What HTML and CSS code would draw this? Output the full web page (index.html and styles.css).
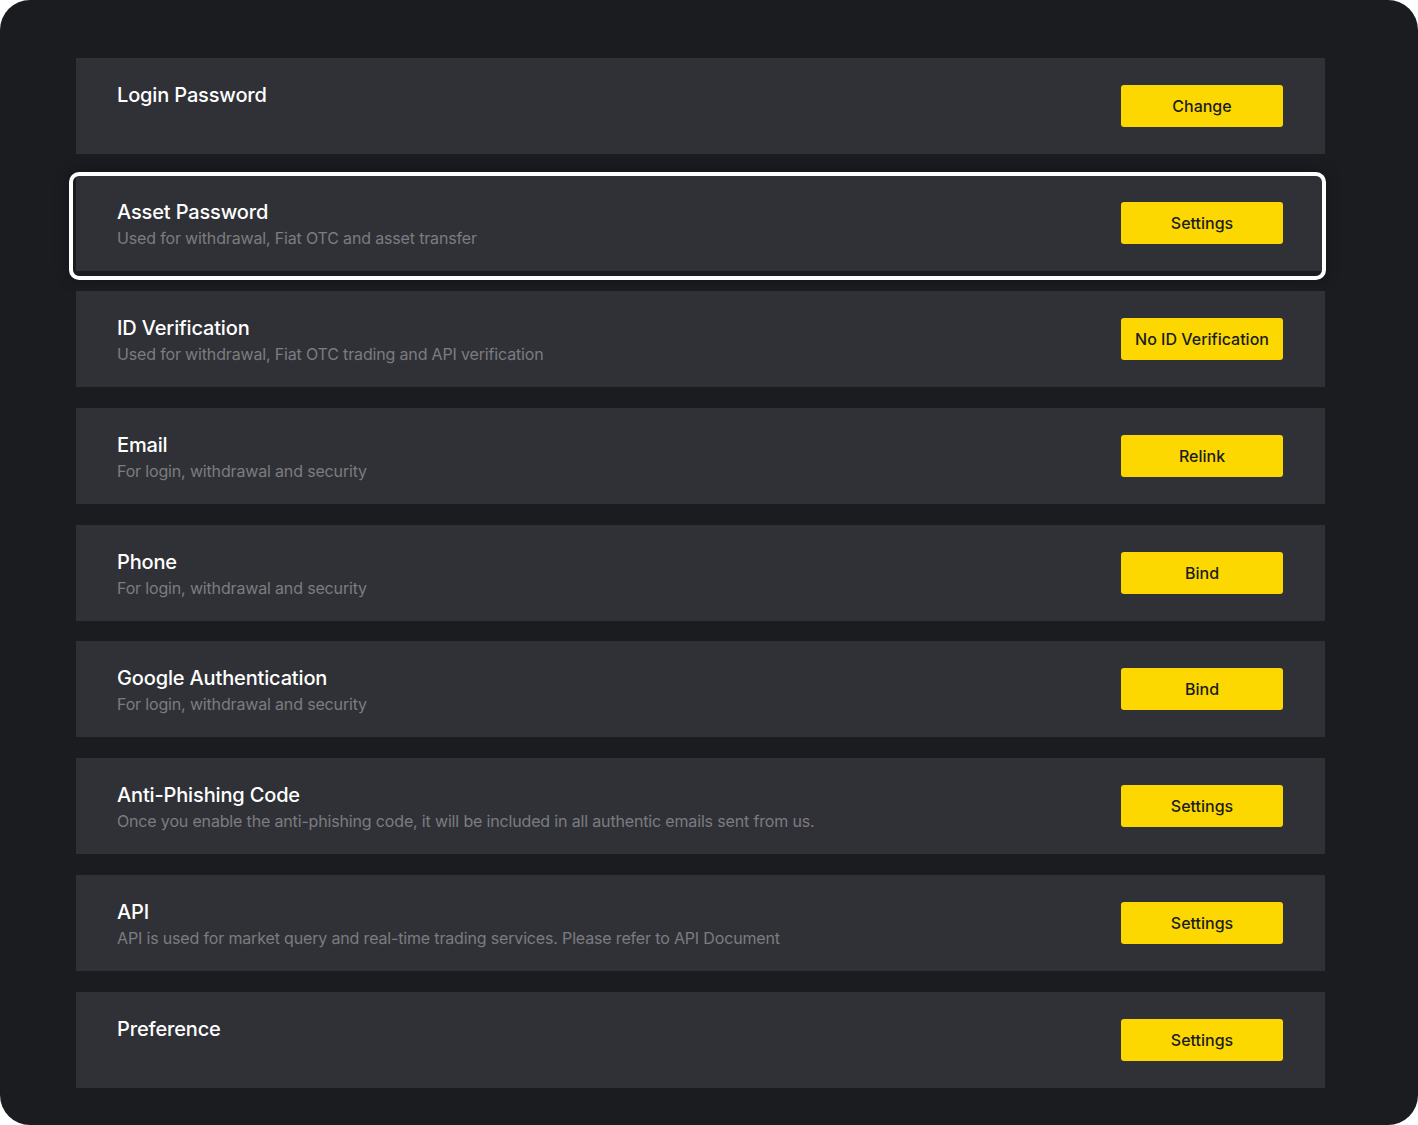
FILE: index.html
```html
<!DOCTYPE html>
<html>
<head>
<meta charset="utf-8">
<link rel="stylesheet" href="styles.css">
</head>
<body>
<div class="panel">
  <div class="list">
    <div class="card">
      <div class="info"><div class="title">Login Password</div></div>
      <button class="btn">Change</button>
    </div>
    <div class="card active">
      <div class="info"><div class="title">Asset Password</div><div class="desc">Used for withdrawal, Fiat OTC and asset transfer</div></div>
      <button class="btn">Settings</button>
      <div class="focus-ring"></div>
    </div>
    <div class="card">
      <div class="info"><div class="title">ID Verification</div><div class="desc">Used for withdrawal, Fiat OTC trading and API verification</div></div>
      <button class="btn">No ID Verification</button>
    </div>
    <div class="card">
      <div class="info"><div class="title">Email</div><div class="desc">For login, withdrawal and security</div></div>
      <button class="btn">Relink</button>
    </div>
    <div class="card">
      <div class="info"><div class="title">Phone</div><div class="desc">For login, withdrawal and security</div></div>
      <button class="btn">Bind</button>
    </div>
    <div class="card">
      <div class="info"><div class="title">Google Authentication</div><div class="desc">For login, withdrawal and security</div></div>
      <button class="btn">Bind</button>
    </div>
    <div class="card">
      <div class="info"><div class="title">Anti-Phishing Code</div><div class="desc">Once you enable the anti-phishing code, it will be included in all authentic emails sent from us.</div></div>
      <button class="btn">Settings</button>
    </div>
    <div class="card">
      <div class="info"><div class="title">API</div><div class="desc">API is used for market query and real-time trading services. Please refer to API Document</div></div>
      <button class="btn">Settings</button>
    </div>
    <div class="card">
      <div class="info"><div class="title">Preference</div></div>
      <button class="btn">Settings</button>
    </div>
  </div>
</div>
</body>
</html>
```
FILE: styles.css
```css
* { box-sizing: border-box; }
html, body { margin: 0; padding: 0; background: #ffffff; }
body { font-family: Inter, "Noto Sans", sans-serif; }
.panel {
  width: 1418px;
  height: 1125px;
  background: #1b1c20;
  border-radius: 30px;
  padding: 58px 93px 0 76px;
}
.list {
  display: flex;
  flex-direction: column;
  gap: 20.7px;
}
.card {
  position: relative;
  height: 96px;
  background: #303136;
  display: flex;
  align-items: center;
  justify-content: space-between;
  padding: 0 42px 0 41px;
}
.info {
  align-self: flex-start;
  padding-top: 24px;
}
.title {
  color: #ffffff;
  font-size: 20px;
  font-weight: 500;
  line-height: 26px;
  letter-spacing: -0.15px;
}
.desc {
  color: #7b7c81;
  font-size: 16px;
  line-height: 26px;
  letter-spacing: -0.16px;
}
.btn {
  width: 162px;
  height: 42px;
  background: #fcd800;
  border: none;
  border-radius: 3px;
  color: #1b1c20;
  font-family: Inter, "Noto Sans", sans-serif;
  font-size: 16px;
  font-weight: 500;
  padding: 0;
}
.focus-ring {
  position: absolute;
  left: -7px;
  top: -3px;
  right: -1px;
  bottom: -9px;
  border: 4px solid #ffffff;
  border-radius: 10px;
  box-shadow: 0 0 14px rgba(0,0,0,0.35);
  pointer-events: none;
}
```
